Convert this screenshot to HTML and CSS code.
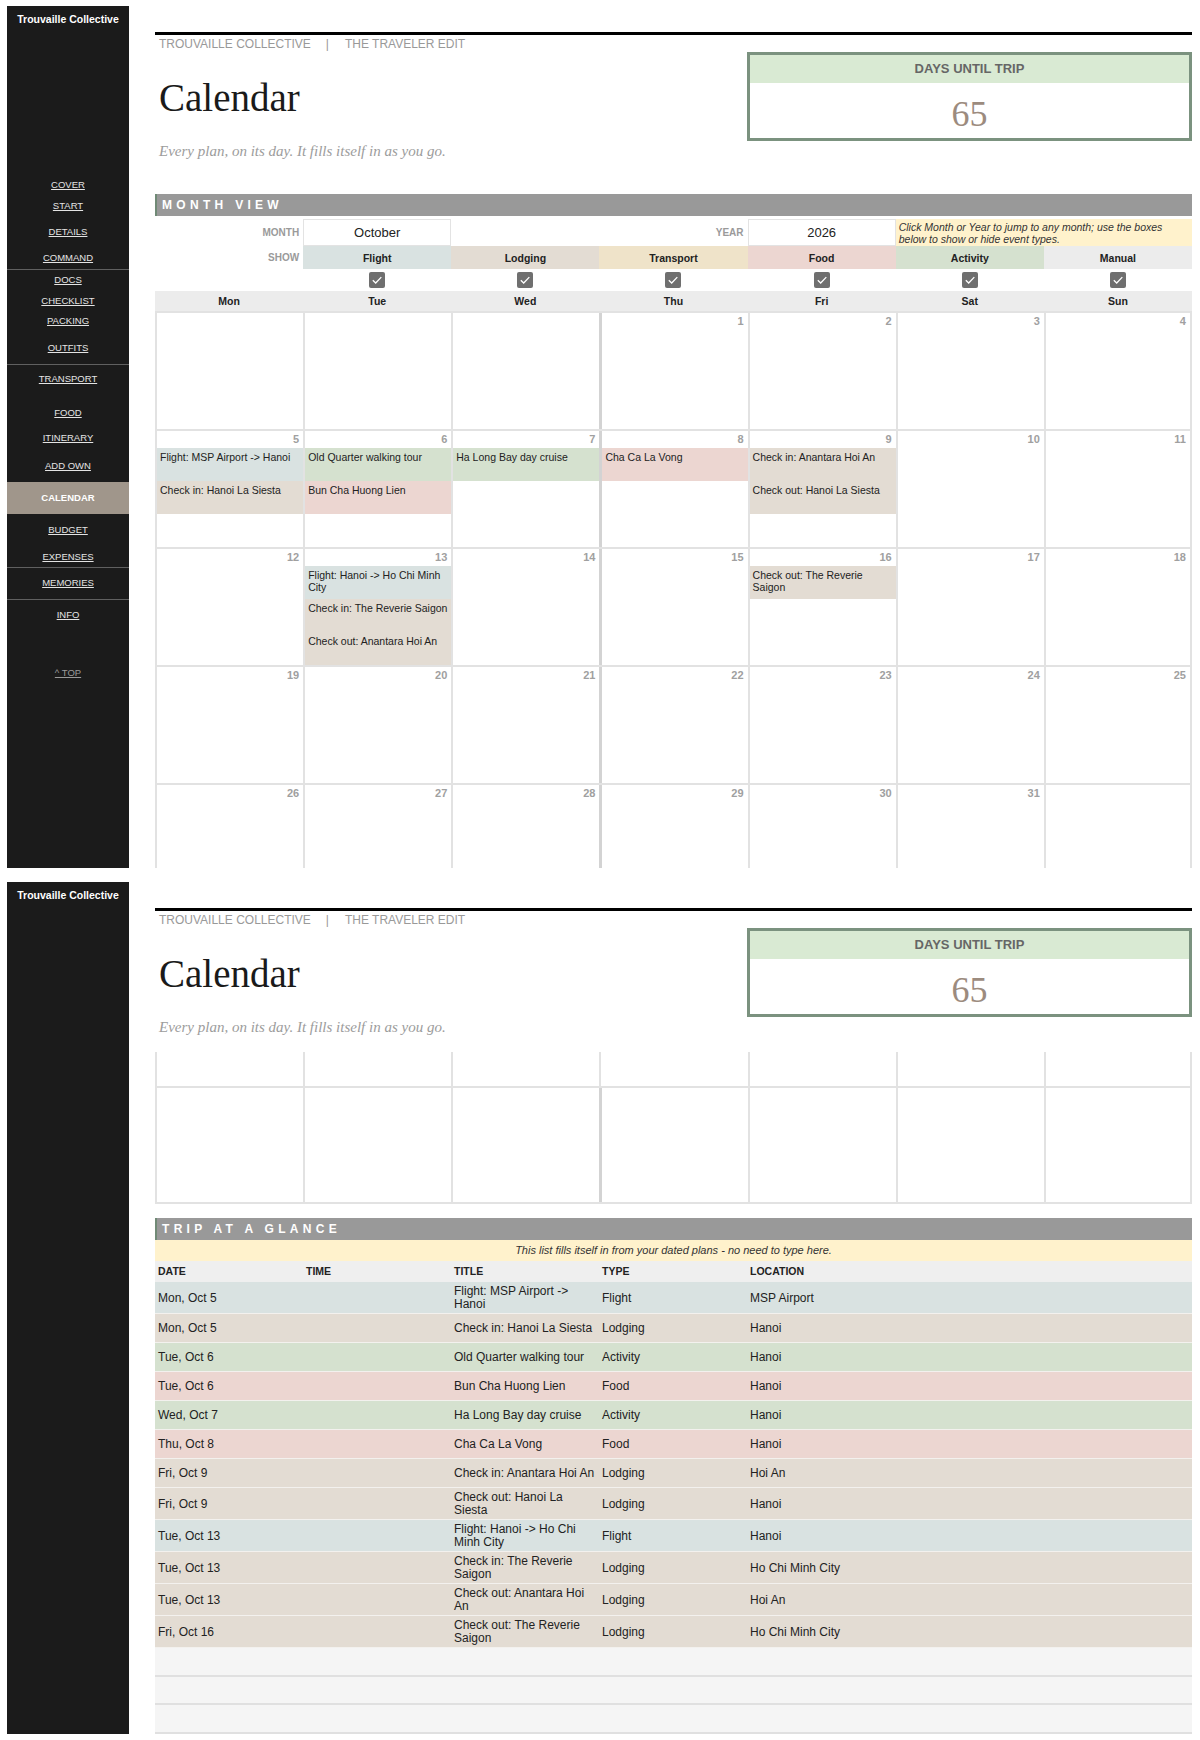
FILE: index.html
```html
<!DOCTYPE html>
<html lang="en">
<head>
<meta charset="utf-8">
<title>Calendar</title>
<link rel="stylesheet" href="styles.css">
</head>
<body>
<div class="panel panel-1">
  <aside class="sidebar">
    <div class="brand">Trouvaille Collective</div>
    <nav class="nav">
      <a class="nav-link n-cover">COVER</a>
      <a class="nav-link n-start">START</a>
      <a class="nav-link n-details">DETAILS</a>
      <a class="nav-link n-command">COMMAND</a>
      <div class="nav-sep s-1"></div>
      <a class="nav-link n-docs">DOCS</a>
      <a class="nav-link n-checklist">CHECKLIST</a>
      <a class="nav-link n-packing">PACKING</a>
      <a class="nav-link n-outfits">OUTFITS</a>
      <div class="nav-sep s-2"></div>
      <a class="nav-link n-transport">TRANSPORT</a>
      <a class="nav-link n-food">FOOD</a>
      <a class="nav-link n-itinerary">ITINERARY</a>
      <a class="nav-link n-addown">ADD OWN</a>
      <div class="nav-active">CALENDAR</div>
      <a class="nav-link n-budget">BUDGET</a>
      <a class="nav-link n-expenses">EXPENSES</a>
      <div class="nav-sep s-3"></div>
      <a class="nav-link n-memories">MEMORIES</a>
      <div class="nav-sep s-4"></div>
      <a class="nav-link n-info">INFO</a>
      <a class="nav-link n-top">^ TOP</a>
    </nav>
  </aside>
  <main class="main">
    <div class="rule"></div>
    <header class="head">
      <div class="head-left">
        <div class="kicker">TROUVAILLE COLLECTIVE<span class="pipe">|</span>THE TRAVELER EDIT</div>
        <h1 class="title">Calendar</h1>
        <p class="subtitle">Every plan, on its day. It fills itself in as you go.</p>
      </div>
      <div class="countdown">
        <div class="countdown-label">DAYS UNTIL TRIP</div>
        <div class="countdown-value">65</div>
      </div>
    </header>

    <div class="section-bar mv-bar">MONTH VIEW</div>

    <div class="mv-row month-row">
      <div class="lbl">MONTH</div>
      <div class="field">October</div>
      <div class="lbl span2">YEAR</div>
      <div class="field">2026</div>
      <div class="note">Click Month or Year to jump to any month; use the boxes below to show or hide event types.</div>
    </div>
    <div class="mv-row show-row">
      <div class="lbl">SHOW</div>
      <div class="type flight">Flight</div>
      <div class="type lodging">Lodging</div>
      <div class="type transport">Transport</div>
      <div class="type food">Food</div>
      <div class="type activity">Activity</div>
      <div class="type manual">Manual</div>
    </div>
    <div class="mv-row cb-row">
      <div></div>
      <div class="cb"><svg class="cb-box" width="16" height="16" viewBox="0 0 16 16"><rect width="16" height="16" rx="2" fill="#6f6f6f"/><path d="M3.8 8.3 L6.7 11 L12.3 5.1" fill="none" stroke="#fff" stroke-width="1.3"/></svg></div>
      <div class="cb"><svg class="cb-box" width="16" height="16" viewBox="0 0 16 16"><rect width="16" height="16" rx="2" fill="#6f6f6f"/><path d="M3.8 8.3 L6.7 11 L12.3 5.1" fill="none" stroke="#fff" stroke-width="1.3"/></svg></div>
      <div class="cb"><svg class="cb-box" width="16" height="16" viewBox="0 0 16 16"><rect width="16" height="16" rx="2" fill="#6f6f6f"/><path d="M3.8 8.3 L6.7 11 L12.3 5.1" fill="none" stroke="#fff" stroke-width="1.3"/></svg></div>
      <div class="cb"><svg class="cb-box" width="16" height="16" viewBox="0 0 16 16"><rect width="16" height="16" rx="2" fill="#6f6f6f"/><path d="M3.8 8.3 L6.7 11 L12.3 5.1" fill="none" stroke="#fff" stroke-width="1.3"/></svg></div>
      <div class="cb"><svg class="cb-box" width="16" height="16" viewBox="0 0 16 16"><rect width="16" height="16" rx="2" fill="#6f6f6f"/><path d="M3.8 8.3 L6.7 11 L12.3 5.1" fill="none" stroke="#fff" stroke-width="1.3"/></svg></div>
      <div class="cb"><svg class="cb-box" width="16" height="16" viewBox="0 0 16 16"><rect width="16" height="16" rx="2" fill="#6f6f6f"/><path d="M3.8 8.3 L6.7 11 L12.3 5.1" fill="none" stroke="#fff" stroke-width="1.3"/></svg></div>
    </div>
    <div class="mv-row dow-row">
      <div>Mon</div><div>Tue</div><div>Wed</div><div>Thu</div><div>Fri</div><div>Sat</div><div>Sun</div>
    </div>

    <div class="week">
      <div class="day"><div class="date"></div></div>
      <div class="day"><div class="date"></div></div>
      <div class="day"><div class="date"></div></div>
      <div class="day split"><div class="date">1</div></div>
      <div class="day"><div class="date">2</div></div>
      <div class="day"><div class="date">3</div></div>
      <div class="day"><div class="date">4</div></div>
    </div>
    <div class="week">
      <div class="day"><div class="date">5</div>
        <div class="ev flight">Flight: MSP Airport -&gt; Hanoi</div>
        <div class="ev lodging">Check in: Hanoi La Siesta</div>
      </div>
      <div class="day"><div class="date">6</div>
        <div class="ev activity">Old Quarter walking tour</div>
        <div class="ev food">Bun Cha Huong Lien</div>
      </div>
      <div class="day"><div class="date">7</div>
        <div class="ev activity">Ha Long Bay day cruise</div>
      </div>
      <div class="day split"><div class="date">8</div>
        <div class="ev food">Cha Ca La Vong</div>
      </div>
      <div class="day"><div class="date">9</div>
        <div class="ev lodging">Check in: Anantara Hoi An</div>
        <div class="ev lodging">Check out: Hanoi La Siesta</div>
      </div>
      <div class="day"><div class="date">10</div></div>
      <div class="day"><div class="date">11</div></div>
    </div>
    <div class="week">
      <div class="day"><div class="date">12</div></div>
      <div class="day"><div class="date">13</div>
        <div class="ev flight">Flight: Hanoi -&gt; Ho Chi Minh City</div>
        <div class="ev lodging">Check in: The Reverie Saigon</div>
        <div class="ev lodging">Check out: Anantara Hoi An</div>
      </div>
      <div class="day"><div class="date">14</div></div>
      <div class="day split"><div class="date">15</div></div>
      <div class="day"><div class="date">16</div>
        <div class="ev lodging">Check out: The Reverie Saigon</div>
      </div>
      <div class="day"><div class="date">17</div></div>
      <div class="day"><div class="date">18</div></div>
    </div>
    <div class="week">
      <div class="day"><div class="date">19</div></div>
      <div class="day"><div class="date">20</div></div>
      <div class="day"><div class="date">21</div></div>
      <div class="day split"><div class="date">22</div></div>
      <div class="day"><div class="date">23</div></div>
      <div class="day"><div class="date">24</div></div>
      <div class="day"><div class="date">25</div></div>
    </div>
    <div class="week">
      <div class="day"><div class="date">26</div></div>
      <div class="day"><div class="date">27</div></div>
      <div class="day"><div class="date">28</div></div>
      <div class="day split"><div class="date">29</div></div>
      <div class="day"><div class="date">30</div></div>
      <div class="day"><div class="date">31</div></div>
      <div class="day"><div class="date"></div></div>
    </div>
  </main>
</div>

<div class="panel panel-2">
  <aside class="sidebar">
    <div class="brand">Trouvaille Collective</div>
  </aside>
  <main class="main">
    <div class="rule"></div>
    <header class="head">
      <div class="head-left">
        <div class="kicker">TROUVAILLE COLLECTIVE<span class="pipe">|</span>THE TRAVELER EDIT</div>
        <h1 class="title">Calendar</h1>
        <p class="subtitle">Every plan, on its day. It fills itself in as you go.</p>
      </div>
      <div class="countdown">
        <div class="countdown-label">DAYS UNTIL TRIP</div>
        <div class="countdown-value">65</div>
      </div>
    </header>

    <div class="week-tail">
      <div class="day"></div><div class="day"></div><div class="day"></div><div class="day split"></div><div class="day"></div><div class="day"></div><div class="day"></div>
    </div>
    <div class="week week-last">
      <div class="day"></div><div class="day"></div><div class="day"></div><div class="day split"></div><div class="day"></div><div class="day"></div><div class="day"></div>
    </div>

    <div class="section-bar glance-bar">TRIP AT A GLANCE</div>
    <div class="glance-note">This list fills itself in from your dated plans - no need to type here.</div>
    <div class="tbl-row tbl-head">
      <div>DATE</div><div>TIME</div><div>TITLE</div><div>TYPE</div><div>LOCATION</div>
    </div>
    <div class="tbl-row flight"><div>Mon, Oct 5</div><div></div><div>Flight: MSP Airport -&gt; Hanoi</div><div>Flight</div><div>MSP Airport</div></div>
    <div class="tbl-row lodging"><div>Mon, Oct 5</div><div></div><div>Check in: Hanoi La Siesta</div><div>Lodging</div><div>Hanoi</div></div>
    <div class="tbl-row activity"><div>Tue, Oct 6</div><div></div><div>Old Quarter walking tour</div><div>Activity</div><div>Hanoi</div></div>
    <div class="tbl-row food"><div>Tue, Oct 6</div><div></div><div>Bun Cha Huong Lien</div><div>Food</div><div>Hanoi</div></div>
    <div class="tbl-row activity"><div>Wed, Oct 7</div><div></div><div>Ha Long Bay day cruise</div><div>Activity</div><div>Hanoi</div></div>
    <div class="tbl-row food"><div>Thu, Oct 8</div><div></div><div>Cha Ca La Vong</div><div>Food</div><div>Hanoi</div></div>
    <div class="tbl-row lodging"><div>Fri, Oct 9</div><div></div><div>Check in: Anantara Hoi An</div><div>Lodging</div><div>Hoi An</div></div>
    <div class="tbl-row lodging"><div>Fri, Oct 9</div><div></div><div>Check out: Hanoi La Siesta</div><div>Lodging</div><div>Hanoi</div></div>
    <div class="tbl-row flight"><div>Tue, Oct 13</div><div></div><div>Flight: Hanoi -&gt; Ho Chi Minh City</div><div>Flight</div><div>Hanoi</div></div>
    <div class="tbl-row lodging"><div>Tue, Oct 13</div><div></div><div>Check in: The Reverie Saigon</div><div>Lodging</div><div>Ho Chi Minh City</div></div>
    <div class="tbl-row lodging"><div>Tue, Oct 13</div><div></div><div>Check out: Anantara Hoi An</div><div>Lodging</div><div>Hoi An</div></div>
    <div class="tbl-row lodging"><div>Fri, Oct 16</div><div></div><div>Check out: The Reverie Saigon</div><div>Lodging</div><div>Ho Chi Minh City</div></div>
    <div class="tbl-empty e-1"></div>
    <div class="tbl-empty e-2"></div>
    <div class="tbl-empty e-3"></div>
  </main>
</div>
</body>
</html>
```

FILE: styles.css
```css
* { box-sizing: border-box; }

html, body {
  margin: 0;
  padding: 0;
  background: #ffffff;
}

body {
  font-family: "Liberation Sans", Arial, sans-serif;
  color: #222;
  width: 1200px;
}

/* ---------- panels ---------- */
.panel {
  display: flex;
  align-items: stretch;
  padding-left: 7px;
  overflow: hidden;
}

.panel-1 {
  margin-top: 6px;
  height: 862px;
}

.panel-2 {
  margin-top: 14px;
  height: 852px;
}

/* ---------- sidebar ---------- */
.sidebar {
  width: 122px;
  flex: 0 0 122px;
  background: #1b1b1b;
  display: flex;
  flex-direction: column;
}

.brand {
  height: 26px;
  line-height: 26px;
  text-align: center;
  color: #ffffff;
  font-weight: bold;
  font-size: 10.5px;
}

.nav {
  display: flex;
  flex-direction: column;
}

.nav-link {
  display: block;
  height: 14px;
  line-height: 14px;
  text-align: center;
  font-size: 9.5px;
  color: #e4e4e4;
  text-decoration: underline;
  text-underline-offset: 1px;
}

.nav-sep {
  height: 1px;
  background: #606060;
}

.nav-active {
  height: 32px;
  line-height: 32px;
  text-align: center;
  background: #a0968b;
  color: #ffffff;
  font-weight: bold;
  font-size: 9.5px;
  margin-top: 9px;
}

.n-cover { margin-top: 146px; }
.n-start { margin-top: 7px; }
.n-details { margin-top: 12px; }
.n-command { margin-top: 12px; }
.s-1 { margin-top: 4px; }
.n-docs { margin-top: 3px; }
.n-checklist { margin-top: 7px; }
.n-packing { margin-top: 6px; }
.n-outfits { margin-top: 13px; }
.s-2 { margin-top: 9px; }
.n-transport { margin-top: 7px; }
.n-food { margin-top: 20px; }
.n-itinerary { margin-top: 11px; }
.n-addown { margin-top: 14px; }
.n-budget { margin-top: 9px; }
.n-expenses { margin-top: 13px; }
.s-3 { margin-top: 3px; }
.n-memories { margin-top: 8px; }
.s-4 { margin-top: 9px; }
.n-info { margin-top: 8px; }
.n-top { margin-top: 44px; color: #9a9a9a; }

/* ---------- main ---------- */
.main {
  margin-left: 26px;
  width: 1037px;
  flex: 0 0 1037px;
  padding-top: 26px;
}

.rule {
  height: 3px;
  background: #000000;
}

.head {
  height: 141px;
  display: flex;
  justify-content: space-between;
  align-items: flex-start;
}

.head-left {
  padding-left: 4px;
}

.kicker {
  height: 18px;
  line-height: 18px;
  font-size: 12px;
  color: #999999;
  white-space: nowrap;
}

.pipe {
  margin: 0 16px 0 15px;
}

.title {
  margin: 0;
  height: 90px;
  line-height: 90px;
  font-family: "Liberation Serif", "Times New Roman", serif;
  font-weight: normal;
  font-size: 39px;
  color: #1a1a1a;
}

.subtitle {
  margin: 0;
  height: 16px;
  line-height: 16px;
  font-family: "Liberation Serif", "Times New Roman", serif;
  font-style: italic;
  font-size: 15px;
  color: #9c9c9c;
  white-space: nowrap;
}

.countdown {
  width: 445px;
  height: 89px;
  margin-top: 17px;
  border: 3px solid #7b927f;
  display: flex;
  flex-direction: column;
}

.countdown-label {
  height: 28px;
  line-height: 28px;
  background: #d9ead3;
  text-align: center;
  font-weight: bold;
  font-size: 13px;
  color: #666666;
}

.countdown-value {
  flex: 1;
  text-align: center;
  padding-top: 7px;
  line-height: 49px;
  font-family: "Liberation Serif", "Times New Roman", serif;
  font-size: 36px;
  color: #9c8b7e;
}

/* ---------- section bars ---------- */
.section-bar {
  height: 22px;
  line-height: 22px;
  background: #999999;
  border-left: 2px solid #708a76;
  padding-left: 5px;
  color: #ffffff;
  font-weight: bold;
  font-size: 12px;
  letter-spacing: 4.3px;
}

.mv-bar { margin-top: 18px; }

/* ---------- month view controls ---------- */
.mv-row {
  display: grid;
  grid-template-columns: repeat(7, 1fr);
}

.month-row {
  height: 27px;
  margin-top: 3px;
}

.lbl {
  display: flex;
  align-items: center;
  justify-content: flex-end;
  padding-right: 4px;
  font-size: 10px;
  font-weight: bold;
  color: #9a9a9a;
}

.span2 { grid-column: span 2; }

.field {
  display: flex;
  align-items: center;
  justify-content: center;
  font-size: 13px;
  color: #222;
  border: 1px solid #e3e3e3;
}

.note {
  grid-column: span 2;
  background: #fff2cc;
  display: flex;
  align-items: center;
  padding: 0 3px;
  font-style: italic;
  font-size: 10.5px;
  line-height: 12px;
  color: #333;
}

.show-row { height: 23px; }

.type {
  display: flex;
  align-items: center;
  justify-content: center;
  font-weight: bold;
  font-size: 10.5px;
  color: #222;
}

.flight { background: #d9e2e1; }
.lodging { background: #e3dcd3; }
.transport { background: #efe3c9; }
.food { background: #ecd6d1; }
.activity { background: #d5e1cf; }
.manual { background: #ececec; }

.cb-row { height: 22px; }

.cb {
  display: flex;
  align-items: center;
  justify-content: center;
}

.cb-box { display: block; }

.dow-row {
  height: 20px;
  background: #ececec;
}

.dow-row > div {
  display: flex;
  align-items: center;
  justify-content: center;
  font-weight: bold;
  font-size: 10.5px;
  color: #222;
}

/* ---------- calendar weeks ---------- */
.week {
  display: grid;
  grid-template-columns: repeat(7, 1fr);
  border-top: 2px solid #e2e2e2;
}

.week .day {
  height: 116px;
  border-left: 2px solid #e2e2e2;
  display: flex;
  flex-direction: column;
}

.week .day:last-child { border-right: 2px solid #e2e2e2; }

.day.split { border-left: 3px solid #d3d3d3; }

.date {
  height: 17px;
  line-height: 17px;
  text-align: right;
  padding-right: 4px;
  font-size: 11px;
  font-weight: bold;
  color: #a0a0a0;
}

.ev {
  height: 33px;
  padding: 3px 1px 0 3px;
  font-size: 10.5px;
  line-height: 12px;
  color: #222;
  overflow: hidden;
}

.week-tail {
  display: grid;
  grid-template-columns: repeat(7, 1fr);
}

.week-tail .day {
  height: 34px;
  border-left: 2px solid #e2e2e2;
}

.week-tail .day:last-child { border-right: 2px solid #e2e2e2; }

.week-last { border-bottom: 2px solid #e2e2e2; }

.week-last .day { height: 114px; }

/* ---------- trip at a glance ---------- */
.glance-bar { margin-top: 14px; }

.glance-note {
  height: 21px;
  line-height: 21px;
  background: #fff2cc;
  text-align: center;
  font-style: italic;
  font-size: 11px;
  color: #333;
}

.tbl-row {
  display: grid;
  grid-template-columns: 148px 148px 148px 148px 1fr;
  align-items: center;
  min-height: 29px;
  border-bottom: 1px solid #f3f1ee;
}

.tbl-row > div {
  padding: 3px 2px 2px 3px;
  font-size: 12px;
  line-height: 13px;
  color: #222;
}

.tbl-head {
  min-height: 21px;
  height: 21px;
  background: #efefef;
  border-bottom: none;
}

.tbl-head > div {
  padding: 0 3px;
  font-weight: bold;
  font-size: 10.5px;
}

.tbl-empty {
  background: #f5f5f5;
  border-bottom: 2px solid #e0e0e0;
}

.e-1 { height: 29px; }
.e-2 { height: 28px; }
.e-3 { height: 29px; }
```
